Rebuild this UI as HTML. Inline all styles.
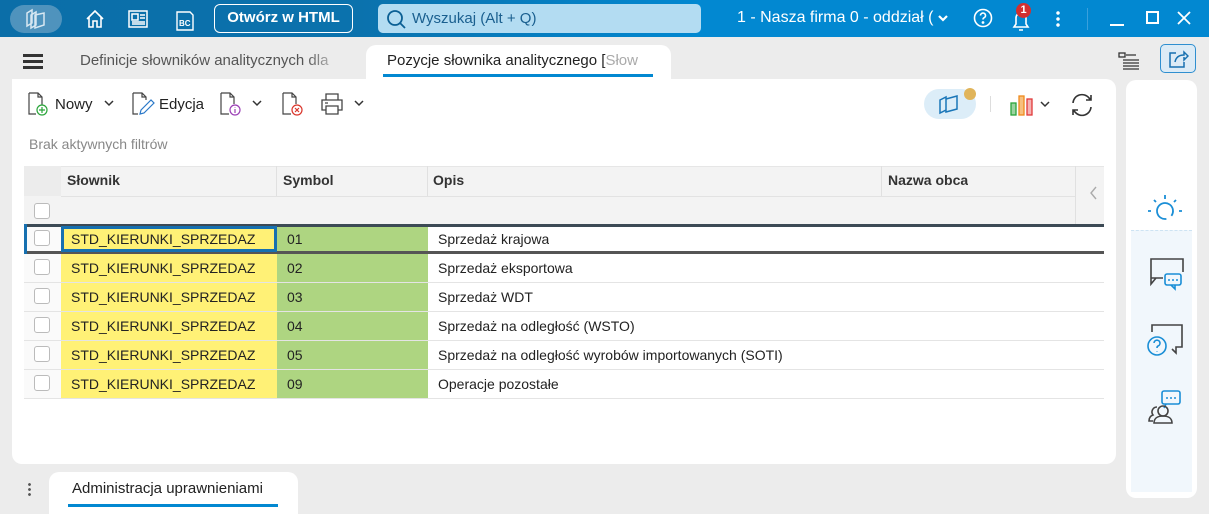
<!DOCTYPE html>
<html><head><meta charset="utf-8"><style>
*{box-sizing:border-box;margin:0;padding:0}
body{width:1209px;height:514px;overflow:hidden;background:#ececec;font-family:"Liberation Sans",sans-serif;position:relative;color:#222}
.abs{position:absolute}
.top{left:0;top:0;width:1209px;height:37px;background:linear-gradient(90deg,#0b6ea8 0,#0b72ad 360px,#0288d1 700px,#0288d1 100%)}
.wt{color:#fff}
.cell{position:absolute;font-size:14px;line-height:29px;padding-left:10px;white-space:nowrap;overflow:hidden}
.cb{position:absolute;left:34px;width:16px;height:16px;border:1px solid #bbb;border-radius:3px;background:#fff}
</style></head><body>
<div class="abs top"></div>
<div class="abs" style="left:10px;top:5px;width:52px;height:28px;border-radius:14px;background:#4f93bd"></div>
<svg class="abs" style="left:22px;top:7px" width="28" height="24" viewBox="0 0 28 24" fill="none" stroke="#d8e8f2" stroke-width="1.5"><path d="M5 6l5-3v13l-5 3z M9 8l5-3v13l-5 3z M13 8l9-2v12l-9 3z"/></svg>
<svg class="abs" style="left:84px;top:8px" width="22" height="22" viewBox="0 0 22 22" fill="none" stroke="#fff" stroke-width="1.6"><path d="M3 11L11 3l8 8M5 9v10h4v-6h4v6h4V9"/></svg>
<svg class="abs" style="left:126px;top:8px" width="24" height="22" viewBox="0 0 24 22" fill="none" stroke="#fff" stroke-width="1.5"><rect x="3" y="3" width="18" height="16"/><rect x="6" y="6" width="6" height="6"/><path d="M14 7h5M14 10h5M6 14h13M6 16h13"/></svg>
<svg class="abs" style="left:174px;top:8px" width="22" height="24" viewBox="0 0 22 24" fill="none" stroke="#fff" stroke-width="1.4"><path d="M3 4h13l3 3v15H3z"/><text x="5" y="18" font-size="8" fill="#fff" stroke="none" font-family="Liberation Sans" font-weight="bold">BC</text></svg>
<div class="abs wt" style="left:214px;top:4px;width:139px;height:29px;border:1.5px solid #fff;border-radius:6px;font-size:15px;font-weight:bold;line-height:26px;text-align:center">Otwórz w HTML</div>
<div class="abs" style="left:378px;top:4px;width:323px;height:29px;border-radius:5px;background:#b3dcf2"></div>
<svg class="abs" style="left:385px;top:8px" width="22" height="22" viewBox="0 0 22 22" fill="none" stroke="#0b5f94" stroke-width="1.8"><circle cx="10" cy="10" r="7"/><path d="M15 15l5 5"/></svg>
<div class="abs" style="left:412px;top:10px;font-size:15px;color:#1a5f8f">Wyszukaj (Alt + Q)</div>
<div class="abs wt" style="left:737px;top:9px;font-size:16px">1 - Nasza firma 0 - oddział (</div>
<svg class="abs" style="left:937px;top:14px" width="12" height="10" viewBox="0 0 12 10" fill="none" stroke="#fff" stroke-width="2.2"><path d="M2 2l4 4 4-4"/></svg>
<svg class="abs" style="left:972px;top:7px" width="22" height="22" viewBox="0 0 22 22" fill="none" stroke="#fff" stroke-width="1.6"><circle cx="11" cy="11" r="8.5"/><path d="M8.5 8.5a2.5 2.5 0 1 1 3.5 2.3c-.8.4-1 .9-1 1.7"/><circle cx="11" cy="15.5" r=".6" fill="#fff"/></svg>
<svg class="abs" style="left:1009px;top:7px" width="24" height="26" viewBox="0 0 24 26" fill="none" stroke="#fff" stroke-width="1.6"><path d="M5 20h14l-2-3v-6a5 5 0 0 0-10 0v6z M10 23h4"/></svg>
<div class="abs wt" style="left:1016px;top:3px;width:15px;height:15px;border-radius:50%;background:#d32f2f;font-size:11px;font-weight:bold;text-align:center;line-height:15px">1</div>
<div class="abs" style="left:1056px;top:10px;width:4px;height:18px;background:radial-gradient(circle,#fff 1.5px,transparent 2px) 0 0/4px 6px"></div>
<div class="abs" style="left:1087px;top:8px;width:1px;height:22px;background:#3aa0dd"></div>
<div class="abs" style="left:1110px;top:24px;width:14px;height:2px;background:#fff"></div>
<div class="abs" style="left:1146px;top:11px;width:13px;height:13px;border:2px solid #fff"></div>
<svg class="abs" style="left:1176px;top:10px" width="16" height="16" viewBox="0 0 16 16" stroke="#fff" stroke-width="1.8"><path d="M2 2l12 12M14 2L2 14"/></svg>

<div class="abs" style="left:23px;top:54px;width:20px;height:15px;border-top:3px solid #333;border-bottom:3px solid #333"><div style="margin-top:3px;height:3px;background:#333"></div></div>
<div class="abs" style="left:80px;top:52px;font-size:15px;color:#555;width:266px;overflow:hidden;white-space:nowrap;-webkit-mask-image:linear-gradient(90deg,#000 85%,transparent)">Definicje słowników analitycznych dla</div>
<div class="abs" style="left:366px;top:45px;width:305px;height:40px;background:#fff;border-radius:10px 10px 0 0"></div>
<div class="abs" style="left:387px;top:52px;font-size:15px;color:#222;width:263px;overflow:hidden;white-space:nowrap">Pozycje słownika analitycznego [<span style="color:#aaa">Słow</span></div>
<div class="abs" style="left:383px;top:74px;width:270px;height:3px;background:#0288d1"></div>
<svg class="abs" style="left:1117px;top:51px" width="24" height="22" viewBox="0 0 24 22" fill="none" stroke="#333" stroke-width="1.3"><rect x="2" y="2" width="6" height="4"/><path d="M9 4h10M6 9h16M6 12h16M6 15h16M6 18h16"/></svg>
<div class="abs" style="left:1160px;top:44px;width:36px;height:29px;border:1.5px solid #2f8fd0;border-radius:5px;background:#dcebf6"></div>
<svg class="abs" style="left:1167px;top:48px" width="22" height="22" viewBox="0 0 22 22" fill="none" stroke="#1670b0" stroke-width="1.5"><path d="M9 5H3v14h14v-5 M8 14c1-5 4-7 9-7V4l4 4-4 4V9"/></svg>

<div class="abs" style="left:12px;top:79px;width:1104px;height:385px;background:#fff;border-radius:0 10px 10px 10px"></div>
<div class="abs" style="left:1126px;top:80px;width:71px;height:418px;background:#fff;border-radius:10px"></div>
<div class="abs" style="left:1131px;top:230px;width:61px;height:262px;background:#f1f7fc;border-top:1px dashed #cde3f3"></div>

<svg class="abs" style="left:26px;top:91px" width="24" height="26" viewBox="0 0 24 26" fill="none" stroke="#444" stroke-width="1.2"><path d="M3 2h9l4 4v8M3 2v21h7M12 2v4h4"/><circle cx="16" cy="19" r="5" stroke="#2aa53a"/><path d="M16 16v6M13 19h6" stroke="#2aa53a"/></svg>
<div class="abs" style="left:55px;top:96px;font-size:15px">Nowy</div>
<svg class="abs" style="left:103px;top:99px" width="12" height="8" fill="none" stroke="#333" stroke-width="1.5"><path d="M2 2l4 4 4-4"/></svg>
<svg class="abs" style="left:130px;top:91px" width="26" height="26" viewBox="0 0 26 26" fill="none" stroke="#444" stroke-width="1.2"><path d="M3 2h9l4 4v3M3 2v21h5M12 2v4h4"/><path d="M10 23l1-4 10-10 3 3-10 10z" stroke="#2a78c8"/></svg>
<div class="abs" style="left:159px;top:96px;font-size:15px">Edycja</div>
<svg class="abs" style="left:218px;top:91px" width="26" height="26" viewBox="0 0 26 26" fill="none" stroke="#444" stroke-width="1.2"><path d="M3 2h9l4 4v7M3 2v21h8M12 2v4h4"/><circle cx="17" cy="19" r="5" stroke="#9b3fb5"/><path d="M17 18v4M17 16v.5" stroke="#9b3fb5"/></svg>
<svg class="abs" style="left:251px;top:99px" width="12" height="8" fill="none" stroke="#333" stroke-width="1.5"><path d="M2 2l4 4 4-4"/></svg>
<svg class="abs" style="left:280px;top:91px" width="26" height="26" viewBox="0 0 26 26" fill="none" stroke="#444" stroke-width="1.2"><path d="M3 2h9l4 4v7M3 2v21h8M12 2v4h4"/><circle cx="17" cy="19" r="5" stroke="#d9352b"/><path d="M15 17l4 4M19 17l-4 4" stroke="#d9352b"/></svg>
<svg class="abs" style="left:320px;top:92px" width="26" height="24" viewBox="0 0 26 24" fill="none" stroke="#444" stroke-width="1.3"><path d="M6 8V2h12v6M6 18H2V8h20v10h-4M6 14h12v8H6z M5 11h3"/></svg>
<svg class="abs" style="left:353px;top:99px" width="12" height="8" fill="none" stroke="#333" stroke-width="1.5"><path d="M2 2l4 4 4-4"/></svg>
<div class="abs" style="left:924px;top:89px;width:52px;height:30px;border-radius:15px;background:#dcedf8"></div>
<svg class="abs" style="left:936px;top:92px" width="26" height="26" viewBox="0 0 26 26" fill="none" stroke="#1a76b8" stroke-width="1.5"><path d="M4 8l6-3v13l-6 3z M10 7l11-3v13l-11 3z"/></svg>
<div class="abs" style="left:964px;top:88px;width:12px;height:12px;border-radius:50%;background:#e0b45a"></div>
<div class="abs" style="left:990px;top:96px;width:1px;height:16px;background:#ddd"></div>
<svg class="abs" style="left:1008px;top:92px" width="28" height="26" viewBox="0 0 28 26"><rect x="3" y="11" width="5" height="12" fill="#9bd3a0" stroke="#2aa53a" stroke-width="1.3"/><rect x="11" y="4" width="5" height="19" fill="#f7c07e" stroke="#ef8a1d" stroke-width="1.3"/><rect x="19" y="7" width="5" height="16" fill="#f5b3b3" stroke="#e03a3a" stroke-width="1.3"/></svg>
<svg class="abs" style="left:1039px;top:100px" width="12" height="8" fill="none" stroke="#333" stroke-width="1.5"><path d="M2 2l4 4 4-4"/></svg>
<svg class="abs" style="left:1068px;top:91px" width="28" height="28" viewBox="0 0 28 28" fill="none" stroke="#333" stroke-width="1.6"><path d="M5 12a9 9 0 0 1 16-5l2 2M23 4v5h-5M23 16a9 9 0 0 1-16 5l-2-2M5 24v-5h5"/></svg>
<div class="abs" style="left:29px;top:136px;font-size:14px;color:#888">Brak aktywnych filtrów</div>

<div class="abs" style="left:24px;top:166px;width:1080px;height:59px;background:#f3f3f3;border-top:1px solid #e6e6e6"></div>
<div class="abs" style="left:61px;top:196px;width:1014px;height:1px;background:#e2e2e2"></div>
<div class="abs" style="left:24px;top:166px;width:37px;height:30px;background:#ececec"></div>
<div class="abs" style="left:276px;top:166px;width:1px;height:30px;background:#e0e0e0"></div>
<div class="abs" style="left:427px;top:166px;width:1px;height:30px;background:#e0e0e0"></div>
<div class="abs" style="left:881px;top:166px;width:1px;height:30px;background:#e0e0e0"></div>
<div class="abs" style="left:1075px;top:166px;width:1px;height:59px;background:#e0e0e0"></div>
<div class="cell" style="left:57px;top:166px;font-weight:bold;color:#333">Słownik</div>
<div class="cell" style="left:273px;top:166px;font-weight:bold;color:#333">Symbol</div>
<div class="cell" style="left:423px;top:166px;font-weight:bold;color:#333">Opis</div>
<div class="cell" style="left:878px;top:166px;font-weight:bold;color:#333">Nazwa obca</div>
<svg class="abs" style="left:1088px;top:185px" width="10" height="16" fill="none" stroke="#aaa" stroke-width="1.4"><path d="M8 2L3 8l5 6"/></svg>
<div class="cb" style="top:203px"></div>

<div id="rows"></div>
<div class="abs" style="left:24px;top:224px;width:1080px;height:3px;background:#3c4a55"></div>
<div class="abs" style="left:24px;top:251px;width:1080px;height:3px;background:#555"></div>
<div class="abs" style="left:24px;top:224px;width:3px;height:30px;background:#1670b0"></div>
<div class="abs" style="left:61px;top:226px;width:216px;height:26px;border:3px solid #1670b0"></div>

<svg class="abs" style="left:1145px;top:193px" width="40" height="34" viewBox="0 0 40 34" fill="none" stroke="#1a8ed6" stroke-width="1.8"><circle cx="20" cy="18" r="8" stroke-dasharray="44 6" transform="rotate(80 20 18)"/><path d="M20 2v4M9 7l2 2M31 7l-2 2M3 18h3M34 18h3"/></svg>
<svg class="abs" style="left:1145px;top:256px" width="40" height="40" viewBox="0 0 40 40" fill="none" stroke-width="1.6"><path d="M18 22h-12V3h32v13 M6 22v6l5-6" stroke="#444"/><rect x="20" y="18" width="16" height="11" rx="2" stroke="#1a8ed6"/><path d="M26 29l4 4v-4M23 24h2M27 24h2M31 24h2" stroke="#1a8ed6"/></svg>
<svg class="abs" style="left:1143px;top:322px" width="42" height="40" viewBox="0 0 42 40" fill="none" stroke-width="1.6"><path d="M9 10V3h30v22h-6v6l-4-4" stroke="#444"/><circle cx="14" cy="24" r="9" stroke="#1a8ed6"/><path d="M11 21a3 3 0 1 1 4 3c-1 .5-1 1-1 2M14 29v.5" stroke="#1a8ed6"/></svg>
<svg class="abs" style="left:1144px;top:389px" width="42" height="36" viewBox="0 0 42 36" fill="none" stroke-width="1.6"><rect x="18" y="2" width="18" height="13" rx="2" stroke="#1a8ed6"/><path d="M22 9h2M26 9h2M30 9h2M22 15l-2 4" stroke="#1a8ed6"/><circle cx="19" cy="22" r="5" stroke="#444"/><path d="M10 34c0-5 4-7 9-7s9 2 9 7z M13 18a5 5 0 0 0-4 8c-3 1-4 3-4 6h4" stroke="#444"/></svg>

<div class="abs" style="left:28px;top:482px;width:3px;height:14px;background:radial-gradient(circle,#555 1.2px,transparent 1.6px) 0 0/3px 5px"></div>
<div class="abs" style="left:49px;top:472px;width:249px;height:42px;background:#fff;border-radius:10px 10px 0 0"></div>
<div class="abs" style="left:72px;top:480px;font-size:15px;width:203px;overflow:hidden;white-space:nowrap">Administracja uprawnieniami</div>
<div class="abs" style="left:68px;top:504px;width:210px;height:3px;background:#0288d1"></div>

<script>
var d=[["01","Sprzedaż krajowa"],["02","Sprzedaż eksportowa"],["03","Sprzedaż WDT"],["04","Sprzedaż na odległość (WSTO)"],["05","Sprzedaż na odległość wyrobów importowanych (SOTI)"],["09","Operacje pozostałe"]];
var h="";
d.forEach(function(r,i){var t=225+i*29;
h+='<div class="abs" style="left:24px;top:'+t+'px;width:37px;height:29px;background:#fafafa"></div>';
h+='<div class="abs" style="left:24px;top:'+(t+28)+'px;width:1080px;height:1px;background:#e4e4e4"></div>';
h+='<div class="cb" style="top:'+(t+5)+'px"></div>';
h+='<div class="cell" style="left:61px;top:'+t+'px;width:216px;height:28px;background:#fff176">STD_KIERUNKI_SPRZEDAZ</div>';
h+='<div class="cell" style="left:277px;top:'+t+'px;width:151px;height:28px;background:#aed581">'+r[0]+'</div>';
h+='<div class="cell" style="left:428px;top:'+t+'px">'+r[1]+'</div>';});
document.getElementById("rows").innerHTML=h;
</script>
</body></html>
